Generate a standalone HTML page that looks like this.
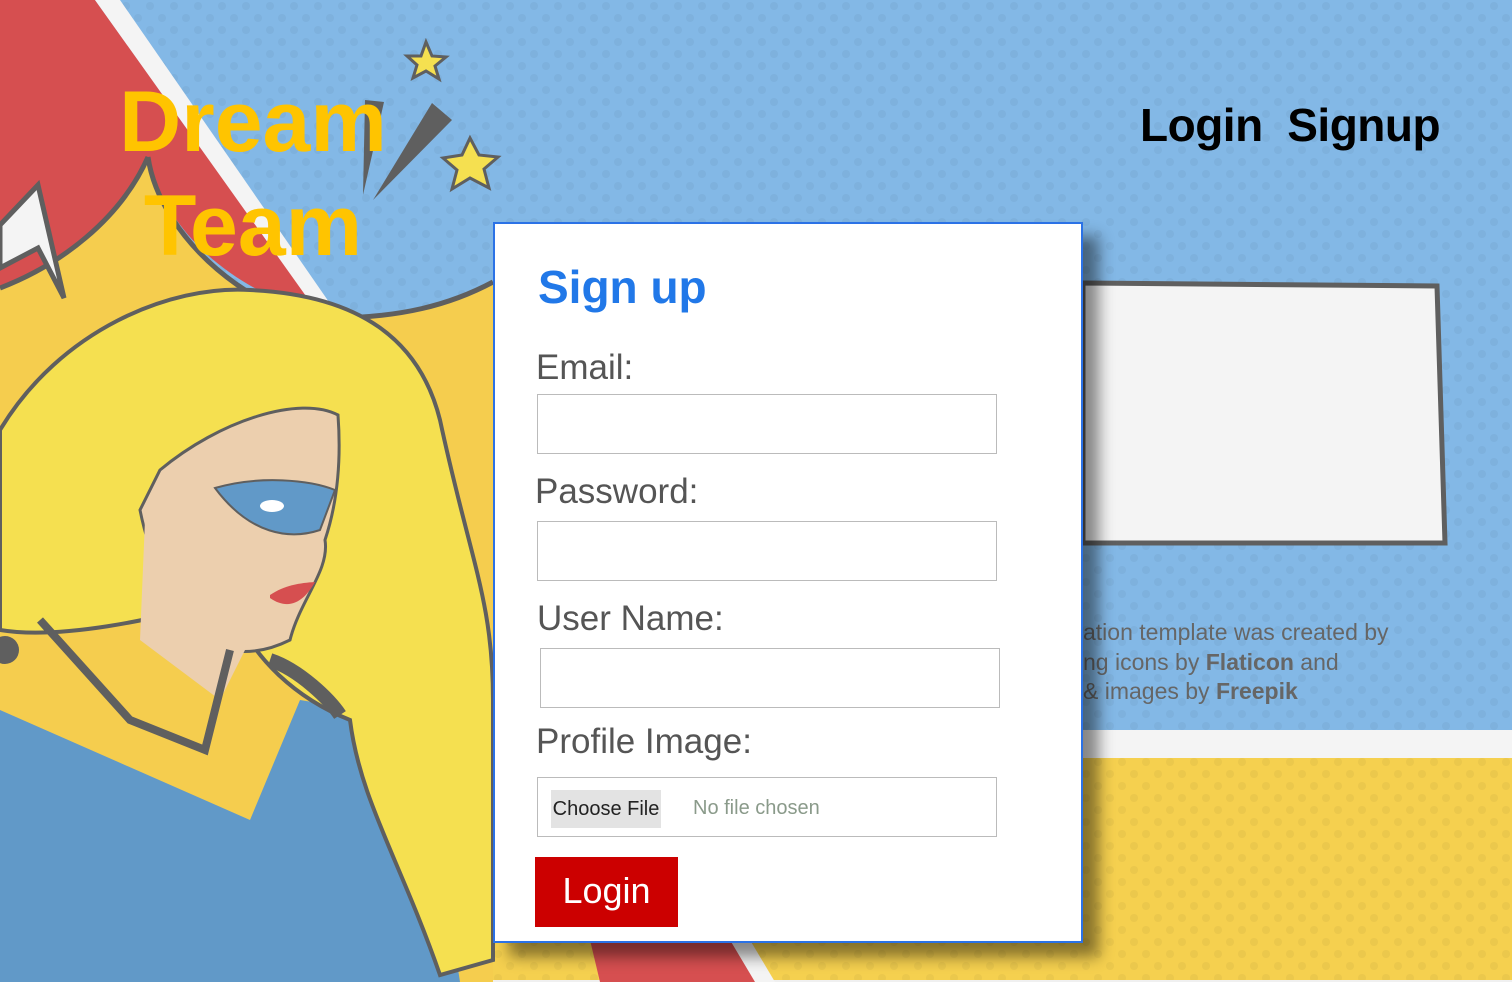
<!DOCTYPE html>
<html><head><meta charset="utf-8"><style>
html,body{margin:0;padding:0;width:1512px;height:982px;overflow:hidden;font-family:"Liberation Sans",sans-serif}
.a{position:absolute}
.lbl{position:absolute;color:#555;font-size:35px;white-space:nowrap}
.inp{position:absolute;width:458px;height:58px;border:1px solid #bbb;background:#fff}
</style></head><body>
<svg class="a" style="left:0;top:0" width="1512" height="982" viewBox="0 0 1512 982">
<defs><pattern id="dots" width="24" height="24" patternUnits="userSpaceOnUse"><circle cx="6" cy="6" r="4" fill="#000" opacity="0.04"/><circle cx="18" cy="18" r="4" fill="#000" opacity="0.04"/></pattern></defs>
<rect width="1512" height="982" fill="#83b8e6"/>
<rect y="758" width="1512" height="222" fill="#f5d04f"/>
<rect width="1512" height="982" fill="url(#dots)"/>
<rect y="730" width="1512" height="28" fill="#f4f4f4"/>
<rect y="980" width="1512" height="2" fill="#f0f0f0"/>
<!-- left panel -->
<path d="M0 288 C60 265 120 220 148 157 C160 240 260 320 330 318 C400 318 450 305 493 282 L493 982 L0 982Z" fill="#f5cd4e"/>
<path d="M0 0 L95 0 L318 312 C260 300 170 250 148 157 C120 220 60 265 0 288Z" fill="#d64f50"/>
<path d="M95 0 L120 0 L340 318 L318 313Z" fill="#f4f4f4"/>
<path d="M148 157 C160 240 260 320 330 318 C400 318 450 305 493 282" fill="none" stroke="#5f5f5f" stroke-width="5"/>
<path d="M148 157 C120 220 60 265 0 288" fill="none" stroke="#5f5f5f" stroke-width="5"/>
<path d="M0 225 L38 185 L64 298 L38 248 L0 268 Z" fill="#f4f4f4" stroke="#5f5f5f" stroke-width="5"/>
<path d="M365 100 L384 102 L363 195 Z" fill="#5f5f5f"/>
<path d="M432 103 L452 120 L373 200 Z" fill="#5f5f5f"/>
<path d="M426 42 L432 56 L446 57 L435 66 L439 79 L426 71 L413 78 L417 65 L407 56 L421 56Z" fill="#f5e050" stroke="#5f5f5f" stroke-width="3"/>
<path d="M470 138 L479 155 L498 157 L484 169 L489 188 L470 178 L452 189 L457 170 L443 158 L462 155Z" fill="#f5e050" stroke="#5f5f5f" stroke-width="3"/>
<!-- suit -->
<path d="M0 710 L250 820 L300 700 L420 720 L460 982 L0 982Z" fill="#6199c8"/>
<!-- hair -->
<path d="M0 430 C60 330 170 285 250 290 C360 295 420 340 440 420 C470 560 493 600 493 700 L493 960 L440 975 C400 860 360 800 350 720 C300 700 250 660 230 600 C150 620 60 640 0 630 Z" fill="#f5e050" stroke="#5f5f5f" stroke-width="4"/>
<!-- face -->
<path d="M160 470 C220 420 300 395 338 415 C342 470 335 510 325 540 C330 570 300 600 290 640 C250 660 220 650 200 640 C170 600 150 560 140 510 Z" fill="#eccfae" stroke="#5f5f5f" stroke-width="3"/>
<path d="M145 520 L140 640 L220 700 L250 640 Z" fill="#eccfae"/>
<path d="M215 488 C260 475 310 480 335 490 L320 530 C290 540 250 535 215 488Z" fill="#6199c8" stroke="#5f5f5f" stroke-width="2"/>
<ellipse cx="272" cy="506" rx="12" ry="6" fill="#fff"/>
<path d="M270 595 C285 585 300 583 315 582 C305 600 290 612 270 598Z" fill="#d64f50"/>
<path d="M40 620 L130 720 L205 750 L230 650" fill="none" stroke="#5f5f5f" stroke-width="8"/>
<path d="M270 660 C300 670 330 700 340 715" fill="none" stroke="#5f5f5f" stroke-width="14"/>
<circle cx="5" cy="650" r="14" fill="#5f5f5f"/>
<!-- bottom stripes -->
<path d="M590 940 L730 940 L760 982 L600 982Z" fill="#d64f50"/>
<path d="M730 940 L750 940 L775 982 L755 982Z" fill="#f4f4f4"/>
<!-- right white panel -->
<path d="M1083 283 L1437 286 L1445 543 L1083 543Z" fill="#f4f4f4" stroke="#5f5f5f" stroke-width="5"/>
</svg>
<div class="a" style="left:0;top:70px;width:506px;text-align:center;color:#ffc400;font-weight:bold;font-size:86px;line-height:104px">Dream<br>Team</div>
<div class="a" style="left:1140px;top:98px;font-weight:bold;font-size:46px;color:#000;white-space:nowrap;letter-spacing:-0.5px">Login&nbsp; Signup</div>
<div class="a" style="left:1083px;top:618px;color:#666;font-size:23px;line-height:29.5px;white-space:nowrap">ation template was created by<br>ng icons by <b>Flaticon</b> and<br>&amp; images by <b>Freepik</b></div>
<div class="a" style="left:493px;top:222px;width:586px;height:717px;background:#fff;border:2px solid #2b72e6;box-shadow:16px 14px 14px rgba(0,0,0,.45)"></div>
<div class="a" style="left:538px;top:260px;color:#2178e8;font-weight:bold;font-size:46px">Sign up</div>
<div class="lbl" style="left:536px;top:348px">Email:</div>
<div class="inp" style="left:537px;top:394px"></div>
<div class="lbl" style="left:535px;top:472px">Password:</div>
<div class="inp" style="left:537px;top:521px"></div>
<div class="lbl" style="left:537px;top:599px">User Name:</div>
<div class="inp" style="left:540px;top:648px"></div>
<div class="lbl" style="left:536px;top:722px">Profile Image:</div>
<div class="inp" style="left:537px;top:777px"></div>
<div class="a" style="left:551px;top:790px;width:110px;height:38px;background:#e3e3e3;color:#222;font-size:20px;line-height:38px;text-align:center">Choose File</div>
<div class="a" style="left:693px;top:797px;color:#8a9a8a;font-size:20px">No file chosen</div>
<div class="a" style="left:535px;top:857px;width:143px;height:70px;background:#cc0000;color:#fff;font-size:36px;line-height:68px;text-align:center">Login</div>
</body></html>
